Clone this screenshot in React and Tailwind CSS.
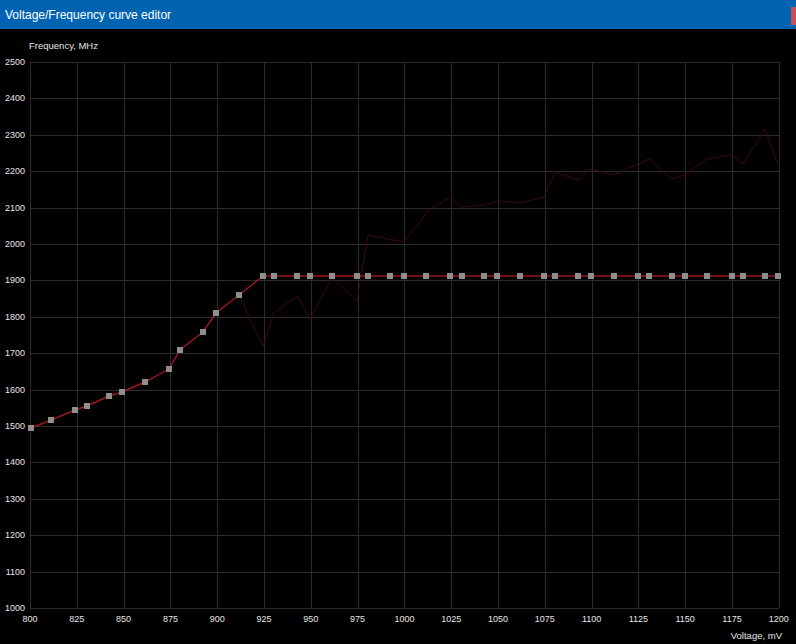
import React from "react";

const X0 = 30, DX = 46.8, Y0 = 62, DY = 36.4;
const xs = Array.from({ length: 17 }, (_, i) => 800 + i * 25);
const ys = Array.from({ length: 16 }, (_, i) => 2500 - i * 100);

const pts = [
  [31, 428], [51, 420], [75, 410], [87, 406], [109, 396], [122, 392], [145, 382],
  [169, 369], [180, 350], [203, 332], [216, 313], [239, 295], [263, 276], [274, 276],
  [297, 276], [310, 276], [332, 276], [357, 276], [368, 276], [390, 276], [404, 276],
  [426, 276], [450, 276], [462, 276], [484, 276], [497, 276], [520, 276], [544, 276],
  [555, 276], [578, 276], [591, 276], [614, 276], [638, 276], [649, 276], [672, 276],
  [685, 276], [707, 276], [732, 276], [743, 276], [765, 276], [778, 276],
];

const dark = [
  [239, 295], [263, 346], [274, 313], [297, 296], [310, 319], [332, 278], [357, 301],
  [368, 235], [404, 242], [428, 211], [450, 197], [462, 207], [484, 205], [497, 201],
  [520, 203], [544, 197], [555, 172], [578, 180], [591, 169], [614, 175], [638, 164],
  [649, 159], [672, 179], [685, 175], [707, 159], [732, 155], [743, 164], [765, 129],
  [778, 165],
];

export default function App() {
  const font = '"Liberation Sans", Arial, sans-serif';
  return (
    <div className="flex flex-col w-[796px] h-[644px] bg-black overflow-hidden" style={{ fontFamily: font }}>
      <div className="relative h-[29px] bg-[#0063b1] flex items-center pl-[5px] shrink-0">
        <span className="text-white text-[12px] leading-none font-['Liberation_Sans',Arial,sans-serif]">
          Voltage/Frequency curve editor
        </span>
        <div className="absolute right-0 top-[7px] w-[5px] h-[18px] bg-[#c75050]" />
      </div>
      <div className="flex-1 bg-black">
        <svg width="796" height="615" viewBox="0 29 796 615" style={{ display: "block" }}>
          <g stroke="#2b2b2b" strokeWidth="1" shapeRendering="crispEdges">
            {xs.map((v, i) => {
              const x = Math.round(X0 + i * DX) + 0.5;
              return <line key={"v" + v} x1={x} x2={x} y1={Y0} y2={Y0 + 15 * DY} />;
            })}
            {ys.map((v, i) => {
              const y = Math.round(Y0 + i * DY) + 0.5;
              return <line key={"h" + v} x1={X0} x2={X0 + 16 * DX} y1={y} y2={y} />;
            })}
          </g>
          <polyline
            points={dark.map((p) => p.join(",")).join(" ")}
            fill="none"
            stroke="#3a0b0b"
            strokeWidth="1"
          />
          <polyline
            points={pts.map((p) => p.join(",")).join(" ")}
            fill="none"
            stroke="#9a1a1a"
            strokeWidth="1.4"
          />
          <g fill="#8e8e8e" shapeRendering="crispEdges">
            {pts.map(([x, y], i) => (
              <rect key={i} x={x - 3} y={y - 3} width="6" height="6" />
            ))}
          </g>
          <g fill="#e6e6e6" fontFamily={font} fontSize="9">
            {ys.map((v, i) => (
              <text key={"yl" + v} x="25" y={Y0 + i * DY + 3} textAnchor="end">
                {v}
              </text>
            ))}
            {xs.map((v, i) => (
              <text key={"xl" + v} x={X0 + i * DX} y="622" textAnchor="middle">
                {v}
              </text>
            ))}
          </g>
          <text x="29" y="49" fill="#e6e6e6" fontFamily={font} fontSize="9.5">
            Frequency, MHz
          </text>
          <text x="782" y="639" fill="#e6e6e6" fontFamily={font} fontSize="9.5" textAnchor="end">
            Voltage, mV
          </text>
        </svg>
      </div>
    </div>
  );
}
